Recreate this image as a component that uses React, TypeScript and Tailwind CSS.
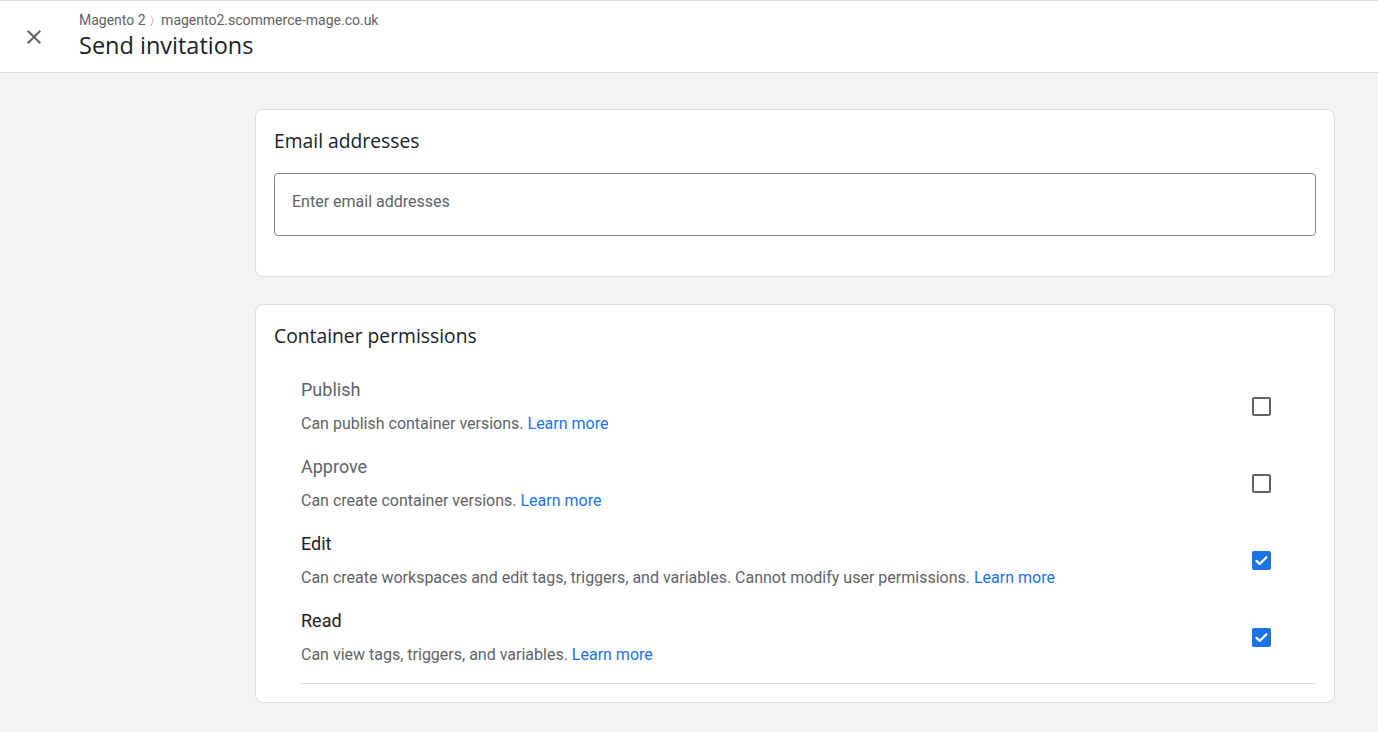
const permissions = [
  { title: 'Publish', desc: 'Can publish container versions.', checked: false, muted: true },
  { title: 'Approve', desc: 'Can create container versions.', checked: false, muted: true },
  {
    title: 'Edit',
    desc: 'Can create workspaces and edit tags, triggers, and variables. Cannot modify user permissions.',
    checked: true,
    muted: false,
  },
  { title: 'Read', desc: 'Can view tags, triggers, and variables.', checked: true, muted: false },
];

function Checkbox({ checked }: { checked: boolean }) {
  if (checked) {
    return (
      <div className="flex h-[19px] w-[19px] items-center justify-center rounded-[2px] bg-[#1a73e8]">
        <svg width="17" height="17" viewBox="0 0 24 24" fill="none">
          <path d="M5 12.5l4.5 4.5L19 7.5" stroke="white" strokeWidth="3.2" strokeLinecap="round" strokeLinejoin="round" />
        </svg>
      </div>
    );
  }
  return <div className="h-[19px] w-[19px] rounded-[2px] border-2 border-[#5f6368]" />;
}

export default function App() {
  return (
    <div className="min-h-[732px] bg-[#f1f3f4] font-['Roboto',sans-serif]">
      <header className="flex h-[73px] items-center border-t border-b border-[#dadce0] bg-white">
        <button className="flex w-[67px] justify-center pl-[1px] text-[#5f6368]">
          <svg width="24" height="24" viewBox="0 0 24 24" fill="currentColor">
            <path d="M19 6.41L17.59 5 12 10.59 6.41 5 5 6.41 10.59 12 5 17.59 6.41 19 12 13.41 17.59 19 19 17.59 13.41 12z" />
          </svg>
        </button>
        <div className="mb-[4px] ml-[12px] flex flex-col">
          <div className="text-[14px] leading-[20px] text-[#5f6368]">
            Magento 2 <span className="text-[12px]">〉</span>magento2.scommerce-mage.co.uk
          </div>
          <h1 className="font-['Open_Sans',sans-serif] text-[23.5px] leading-[28px] text-[#202124]">Send invitations</h1>
        </div>
      </header>

      <main className="flex flex-col gap-[27px] pt-[36px] pb-[29px] pl-[255px] pr-[43px]">
        <section className="rounded-[8px] border border-[#dadce0] bg-white px-[18px] pt-[19px] pb-[40px]">
          <h2 className="font-['Open_Sans',sans-serif] text-[19.3px] leading-[24px] text-[#202124]">Email addresses</h2>
          <div className="mt-[20px] flex h-[63px] items-center rounded-[4px] border border-[#80868b] px-[17px] pb-[5px] text-[16px] text-[#5f6368]">
            Enter email addresses
          </div>
        </section>

        <section className="rounded-[8px] border border-[#dadce0] bg-white px-[18px] pt-[19px] pb-[18px]">
          <h2 className="font-['Open_Sans',sans-serif] text-[19.3px] leading-[24px] text-[#202124]">Container permissions</h2>
          <div className="mt-[30px] ml-[27px] border-b border-[#dadce0]">
            {permissions.map((p) => (
              <div key={p.title} className="flex items-center pb-[21px] last:pb-[18px]">
                <div className="flex-1">
                  <div className={`text-[18px] leading-[24px] ${p.muted ? 'text-[#5f6368]' : 'text-[#202124]'}`}>
                    {p.title}
                  </div>
                  <div className="mt-[12px] text-[16px] leading-[20px] text-[#5f6368]">
                    {p.desc} <a className="text-[#1a73e8]">Learn more</a>
                  </div>
                </div>
                <div className="mr-[45px]">
                  <Checkbox checked={p.checked} />
                </div>
              </div>
            ))}
          </div>
        </section>
      </main>
    </div>
  );
}
